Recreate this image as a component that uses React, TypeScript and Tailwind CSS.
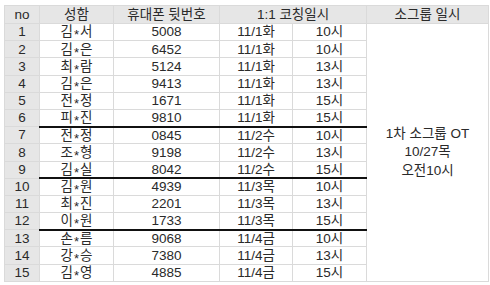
import React from 'react';

type Row = { no: number; name: [string, string]; phone: string; date: string; time: string; breakAfter?: boolean };

const rows: Row[] = [
  { no: 1, name: ['김', '서'], phone: '5008', date: '11/1화', time: '10시' },
  { no: 2, name: ['김', '은'], phone: '6452', date: '11/1화', time: '10시' },
  { no: 3, name: ['최', '람'], phone: '5124', date: '11/1화', time: '13시' },
  { no: 4, name: ['김', '은'], phone: '9413', date: '11/1화', time: '13시' },
  { no: 5, name: ['전', '정'], phone: '1671', date: '11/1화', time: '15시' },
  { no: 6, name: ['피', '진'], phone: '9810', date: '11/1화', time: '15시', breakAfter: true },
  { no: 7, name: ['전', '정'], phone: '0845', date: '11/2수', time: '10시' },
  { no: 8, name: ['조', '형'], phone: '9198', date: '11/2수', time: '13시' },
  { no: 9, name: ['김', '실'], phone: '8042', date: '11/2수', time: '15시', breakAfter: true },
  { no: 10, name: ['김', '원'], phone: '4939', date: '11/3목', time: '10시' },
  { no: 11, name: ['최', '진'], phone: '2201', date: '11/3목', time: '13시' },
  { no: 12, name: ['이', '원'], phone: '1733', date: '11/3목', time: '15시', breakAfter: true },
  { no: 13, name: ['손', '름'], phone: '9068', date: '11/4금', time: '10시' },
  { no: 14, name: ['강', '승'], phone: '7380', date: '11/4금', time: '13시' },
  { no: 15, name: ['김', '영'], phone: '4885', date: '11/4금', time: '15시' },
];

export default function App() {
  const cell = 'border border-[#dadada] p-0 text-center align-middle';
  const thick = (r: Row) => (r.breakAfter ? 'border-b-2 border-b-[#111]' : '');

  return (
    <div
      className="w-[490px] h-[285px] bg-white pt-[5px] pl-[4px] text-[#2a2a2a] text-[13.5px] leading-none"
      style={{ fontFamily: '"Liberation Sans", "Noto Sans CJK KR", sans-serif' }}
    >
      <table className="border-collapse table-fixed w-[484px]">
        <colgroup>
          <col className="w-[35px]" />
          <col className="w-[74px]" />
          <col className="w-[106px]" />
          <col className="w-[73px]" />
          <col className="w-[74px]" />
          <col className="w-[122px]" />
        </colgroup>
        <thead>
          <tr className="h-[18px] bg-[#e6e6e6] text-[#2a2a2a]">
            <th className={`${cell} font-normal`}>no</th>
            <th className={`${cell} font-normal`}>성함</th>
            <th className={`${cell} font-normal`}>휴대폰 뒷번호</th>
            <th colSpan={2} className={`${cell} font-normal`}>1:1 코칭일시</th>
            <th className={`${cell} font-normal`}>소그룹 일시</th>
          </tr>
        </thead>
        <tbody>
          {rows.map((r, i) => (
            <tr key={r.no} className="h-[17.2px]">
              <td className={`${cell} bg-[#e6e6e6]`}>{r.no}</td>
              <td className={`${cell} ${thick(r)}`}>
                {r.name[0]}
                <span className="relative top-[3px] mx-[1px] text-[13px]">*</span>
                {r.name[1]}
              </td>
              <td className={`${cell} ${thick(r)}`}>{r.phone}</td>
              <td className={`${cell} ${thick(r)}`}>{r.date}</td>
              <td className={`${cell} ${thick(r)}`}>{r.time}</td>
              {i === 0 && (
                <td rowSpan={15} className={`${cell} leading-[18.5px]`}>
                  1차 소그룹 OT
                  <br />
                  10/27목
                  <br />
                  오전10시
                </td>
              )}
            </tr>
          ))}
        </tbody>
      </table>
    </div>
  );
}
